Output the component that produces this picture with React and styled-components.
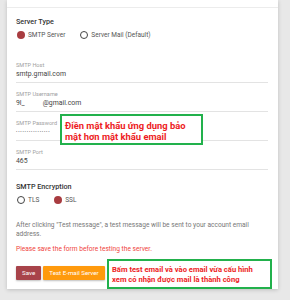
import React from 'react'
import styled, { createGlobalStyle } from 'styled-components'

const GlobalStyle = createGlobalStyle`
  html, body {
    margin: 0;
    padding: 0;
    background: #e8e8e8;
    font-family: Roboto, "Noto Sans", Arial, sans-serif;
  }
`

const fields = [
  { label: 'SMTP Host', value: 'smtp.gmail.com' },
  { label: 'SMTP Username', value: 'user' },
  { label: 'SMTP Password', value: 'password' },
  { label: 'SMTP Port', value: '465' },
]

function Radio({ checked, children }) {
  return (
    <RadioItem>
      <RadioDot checked={checked} />
      <span>{children}</span>
    </RadioItem>
  )
}

function FieldValue({ value }) {
  if (value === 'user') {
    return (
      <Value>
        9l_<Blur />@gmail.com
      </Value>
    )
  }
  if (value === 'password') {
    return <Dots>{'•'.repeat(16)}</Dots>
  }
  return <Value>{value}</Value>
}

export default function App() {
  return (
    <Page>
      <GlobalStyle />
      <Card>
        <CardTop />
        <SectionTitle>Server Type</SectionTitle>
        <RadioRow>
          <Radio checked>SMTP Server</Radio>
          <Radio>Server Mail (Default)</Radio>
        </RadioRow>

        <Fields>
          {fields.map((f) => (
            <Field key={f.label}>
              <Label>{f.label}</Label>
              <FieldValue value={f.value} />
            </Field>
          ))}
        </Fields>

        <SectionTitle top={12}>SMTP Encryption</SectionTitle>
        <RadioRow>
          <Radio>TLS</Radio>
          <Radio checked>SSL</Radio>
        </RadioRow>

        <Help>
          After clicking "Test message", a test message will be sent to your account email
          address.
        </Help>
        <Warning>Please save the form before testing the server.</Warning>

        <Buttons>
          <Button>Save</Button>
          <Button orange>Test E-mail Server</Button>
        </Buttons>
      </Card>

      <Note left={60} top={114} width={143} height={31} size={9.4} line={11} pad={3.5}>
        Điền mật khẩu ứng dụng bảo
        <br />
        mật hơn mật khẩu email
      </Note>
      <Note left={107} top={259} width={165} height={30} size={7.6} line={9.5} pad={4}>
        Bấm test email và vào email vừa cấu hình
        <br />
        xem có nhận được mail là thành công
      </Note>
    </Page>
  )
}

const Page = styled.div`
  position: relative;
  width: 290px;
  height: 300px;
  overflow: hidden;
`

const Card = styled.div`
  margin-left: 7px;
  width: 271px;
  background: #fff;
  box-shadow: 0 1px 4px rgba(0, 0, 0, 0.18);
  padding: 0 10px 9px 9px;
  box-sizing: border-box;
  display: flex;
  flex-direction: column;
`

const CardTop = styled.div`
  height: 7px;
  margin: 0 -10px 0 -9px;
  border-bottom: 1px solid #ececec;
`

const SectionTitle = styled.div`
  margin-top: ${(p) => p.top ?? 9}px;
  font-size: 7.2px;
  line-height: 10px;
  font-weight: 500;
  color: #333;
`

const RadioRow = styled.div`
  display: flex;
  gap: 14px;
  margin-top: 3px;
  height: 10px;
  align-items: center;
`

const RadioItem = styled.div`
  display: flex;
  align-items: center;
  gap: 3px;
  font-size: 6.5px;
  color: #555;
`

const RadioDot = styled.span`
  width: 8px;
  height: 8px;
  border-radius: 50%;
  box-sizing: border-box;
  background: ${(p) => (p.checked ? '#a83c40' : '#fff')};
  border: ${(p) => (p.checked ? 'none' : '1.3px solid #444')};
  margin-left: 1px;
`

const Fields = styled.div`
  display: flex;
  flex-direction: column;
  gap: 7px;
  margin-top: 21px;
`

const Field = styled.div`
  display: flex;
  flex-direction: column;
  padding-bottom: 3px;
  border-bottom: 1px solid #e3e3e3;
`

const Label = styled.div`
  font-size: 5.6px;
  line-height: 8px;
  color: #a0a0a0;
`

const Value = styled.div`
  font-size: 6.9px;
  line-height: 10px;
  color: #444;
  display: flex;
  align-items: center;
`

const Blur = styled.span`
  display: inline-block;
  width: 18px;
`

const Dots = styled.div`
  font-size: 4px;
  line-height: 10px;
  letter-spacing: 0.8px;
  color: #555;
`

const Help = styled.div`
  margin-top: 16px;
  font-size: 6.6px;
  line-height: 9px;
  color: #777;
`

const Warning = styled.div`
  margin-top: 6px;
  font-size: 6.6px;
  line-height: 9px;
  color: #f0443d;
`

const Buttons = styled.div`
  display: flex;
  gap: 2px;
  margin-top: 12px;
`

const Button = styled.div`
  height: 14px;
  padding: 0 6px;
  display: flex;
  align-items: center;
  font-size: 6.2px;
  color: #fff;
  background: ${(p) => (p.orange ? '#ff9a0d' : '#a8434a')};
  box-shadow: 0 1px 2px rgba(0, 0, 0, 0.25);
  border-radius: 1px;
`

const Note = styled.div`
  position: absolute;
  left: ${(p) => p.left}px;
  top: ${(p) => p.top}px;
  width: ${(p) => p.width}px;
  height: ${(p) => p.height}px;
  box-sizing: border-box;
  border: 2px solid #22b14c;
  background: #fff;
  padding: ${(p) => p.pad}px 0 0 3px;
  font-size: ${(p) => p.size}px;
  line-height: ${(p) => p.line}px;
  font-weight: 700;
  color: #ed1c24;
  white-space: nowrap;
`
